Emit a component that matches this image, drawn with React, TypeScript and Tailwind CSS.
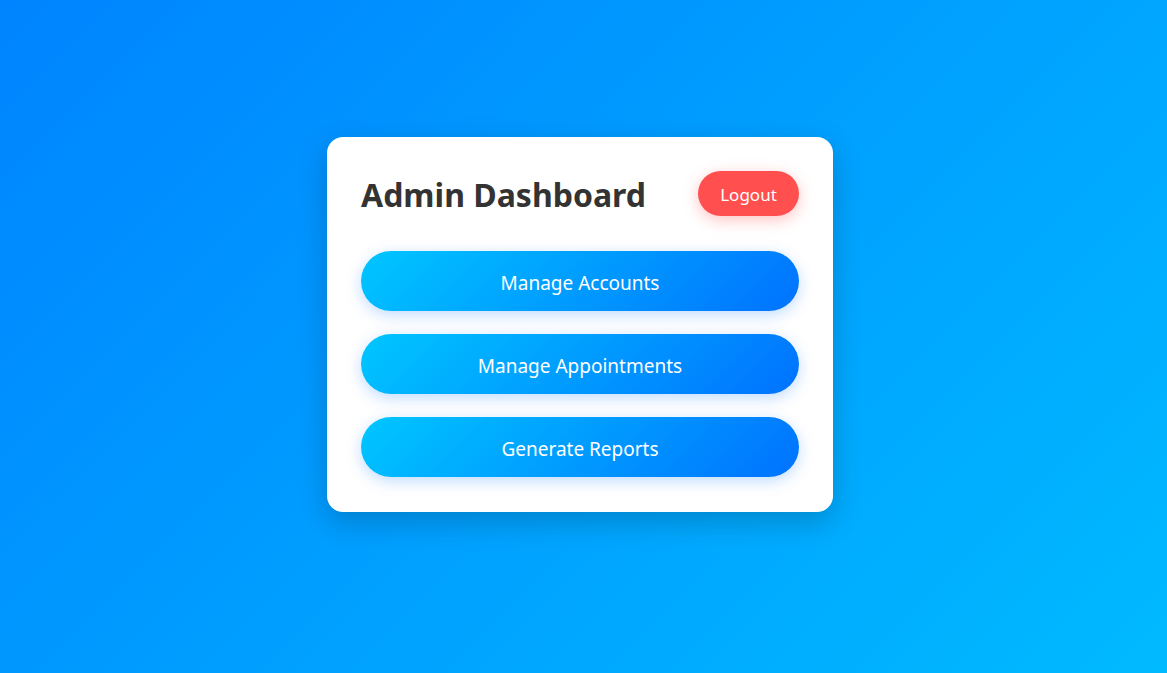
export default function App() {
  const items = ["Manage Accounts", "Manage Appointments", "Generate Reports"];
  return (
    <div
      className="flex h-[673px] w-full items-center justify-center bg-[linear-gradient(135deg,#0084ff,#00baff)] pb-[24px] pr-[7px]"
      style={{ fontFamily: '"Noto Sans", "Open Sans", sans-serif' }}
    >
      <div className="w-[506px] rounded-[16px] bg-white px-[34px] pb-[35px] pt-[34px] shadow-[0_10px_30px_rgba(0,0,0,0.2)]">
        <div className="flex items-center justify-between">
          <h1 className="pt-[3px] text-[32px] font-bold leading-none text-[#333333]">Admin Dashboard</h1>
          <button className="h-[45px] w-[101px] rounded-full bg-[#ff4f4f] pt-[2px] text-[17px] text-white shadow-[0_4px_15px_rgba(255,82,82,0.35)]">
            Logout
          </button>
        </div>
        <div className="mt-[35px] flex flex-col gap-[23px]">
          {items.map((t) => (
            <button
              key={t}
              className="h-[60px] w-full rounded-full bg-[linear-gradient(135deg,#00c6ff,#0072ff)] pt-[4px] text-[19px] text-white shadow-[0_4px_15px_rgba(0,114,255,0.25)]"
            >
              {t}
            </button>
          ))}
        </div>
      </div>
    </div>
  );
}
